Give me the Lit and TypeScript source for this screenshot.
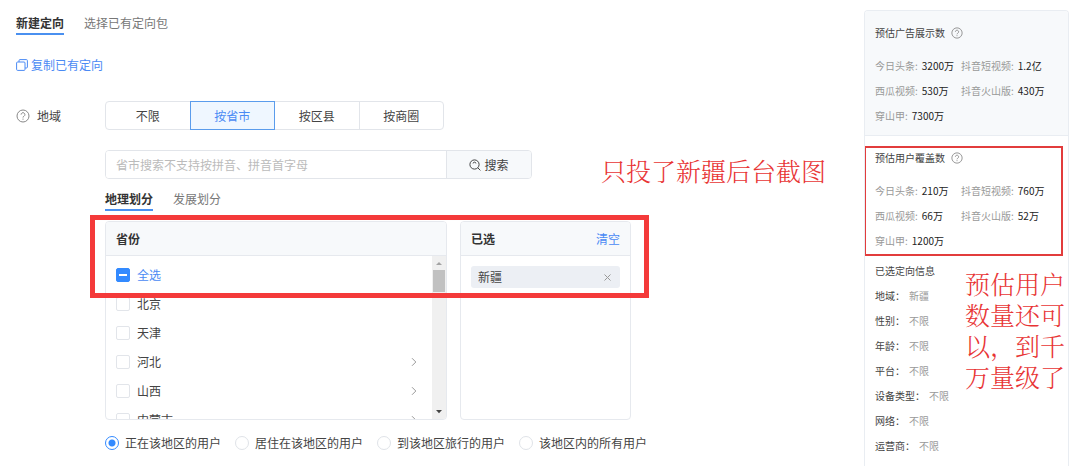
import { LitElement, html, css, svg } from "lit";
import { customElement, state } from "lit/decorators.js";

type Pair = [string, string];

const REGION_MODES = ["不限", "按省市", "按区县", "按商圈"];
const PROVINCES: { name: string; expandable: boolean }[] = [
  { name: "北京", expandable: false },
  { name: "天津", expandable: false },
  { name: "河北", expandable: true },
  { name: "山西", expandable: true },
  { name: "内蒙古", expandable: true },
];
const AUDIENCES = ["正在该地区的用户", "居住在该地区的用户", "到该地区旅行的用户", "该地区内的所有用户"];
const IMPRESSIONS: Pair[] = [
  ["今日头条", "3200万"],
  ["抖音短视频", "1.2亿"],
  ["西瓜视频", "530万"],
  ["抖音火山版", "430万"],
  ["穿山甲", "7300万"],
];
const REACH: Pair[] = [
  ["今日头条", "210万"],
  ["抖音短视频", "760万"],
  ["西瓜视频", "66万"],
  ["抖音火山版", "52万"],
  ["穿山甲", "1200万"],
];
const TARGETING: Pair[] = [
  ["地域", "新疆"],
  ["性别", "不限"],
  ["年龄", "不限"],
  ["平台", "不限"],
  ["设备类型", "不限"],
  ["网络", "不限"],
  ["运营商", "不限"],
];

const helpIcon = (size: number) => html`<svg class="help" width=${size} height=${size} viewBox="0 0 14 14" fill="none" stroke="currentColor" aria-hidden="true">
  ${svg`<circle cx="7" cy="7" r="6"/><path d="M5.1 5.6a1.9 1.9 0 1 1 2.9 1.6c-.7.4-1 .7-1 1.3"/><path d="M7 9.6v1.1"/>`}
</svg>`;

const reset = css`
  * { box-sizing: border-box; }
  button, input { font: inherit; color: inherit; margin: 0; }
  button { padding: 0; border: 0; background: none; cursor: pointer; }
  a { text-decoration: none; }
`;

@customElement("region-picker")
export class RegionPicker extends LitElement {
  static styles = [reset, css`
    :host { display: block; position: relative; }
    .panels { display: flex; gap: 13px; }
    .panel { height: 199px; border: 1px solid #e6e9ee; border-radius: 4px; overflow: hidden; background: #fff; }
    .source { width: 342px; }
    .chosen { width: 171px; }
    .head { display: flex; justify-content: space-between; align-items: center; height: 34px; padding: 0 10px; background: #f7f9fb; border-bottom: 1px solid #e6e9ee; }
    .title { font-weight: 700; color: #333; }
    .clear { color: #4a8af4; }
    .body { display: flex; height: 163px; }
    .list { flex: 1; margin: 0; padding: 4px 14px 0 10px; list-style: none; overflow: hidden; }
    .row { display: flex; align-items: center; justify-content: space-between; height: 29px; }
    .pick { display: flex; align-items: center; gap: 7px; }
    .all { color: #4a8af4; }
    .box { appearance: none; width: 14px; height: 14px; border: 1px solid #e2e5ea; border-radius: 2px; background: #fff; }
    .box:checked { background: #338aff; border-color: #338aff; }
    .box:indeterminate { border-color: #338aff; background: linear-gradient(#fff, #fff) center / 8px 2px no-repeat #338aff; }
    .arrow { display: block; color: #999; }
    .bar { display: flex; flex-direction: column; align-items: center; justify-content: space-between; width: 14px; background: #f0f0f0; }
    .thumb { width: 12px; height: 22px; background: #c1c1c1; }
    .cap { display: block; height: 14px; }
    .spacer { flex: 1; }
    .tag { display: flex; align-items: center; justify-content: space-between; height: 22px; margin: 10px; padding: 0 8px 0 7px; border-radius: 3px; background: #eceff4; }
    .remove { display: block; color: #999; line-height: 0; }
    .mark { position: absolute; top: -6px; left: -15px; width: 559px; height: 83px; border: 5px solid #f43a3a; pointer-events: none; }
  `];

  render() {
    return html`
      <div class="panels">
        <section class="panel source">
          <header class="head"><span class="title">省份</span></header>
          <div class="body">
            <ul class="list">
              <li class="row"><label class="pick all"><input class="box" type="checkbox" .indeterminate=${true}>全选</label></li>
              ${PROVINCES.map((p) => html`
                <li class="row">
                  <label class="pick"><input class="box" type="checkbox">${p.name}</label>
                  ${p.expandable ? html`<button aria-label="展开${p.name}"><svg class="arrow" width="8" height="10" viewBox="0 0 8 10" fill="none" stroke="currentColor"><path d="M2 1.2 5.8 5 2 8.8"/></svg></button>` : null}
                </li>`)}
            </ul>
            <div class="bar">
              <svg class="cap" width="14" height="14" viewBox="0 0 14 14"><path d="M4 9 7 6l3 3z" fill="#a3a3a3"/></svg>
              <div class="thumb"></div>
              <div class="spacer"></div>
              <svg class="cap" width="14" height="14" viewBox="0 0 14 14"><path d="M4 5h6L7 8.2z" fill="#444"/></svg>
            </div>
          </div>
        </section>
        <section class="panel chosen">
          <header class="head"><span class="title">已选</span><button class="clear">清空</button></header>
          <div class="tag">新疆<button class="remove" aria-label="移除新疆"><svg width="9" height="9" viewBox="0 0 9 9" fill="none" stroke="currentColor"><path d="m1.5 1.5 6 6m0-6-6 6"/></svg></button></div>
        </section>
      </div>
      <div class="mark"></div>
    `;
  }
}

@customElement("estimate-panel")
export class EstimatePanel extends LitElement {
  static styles = [reset, css`
    :host { display: block; border: 1px solid #e9edf2; border-bottom: 0; border-radius: 4px 4px 0 0; font-size: 10px; line-height: 20px; color: #444; overflow: hidden; }
    .block { position: relative; padding: 12px 10px 7px; }
    .tinted { background: #f7f9fb; border-bottom: 1px solid #e9edf2; }
    .reach { padding-bottom: 5px; }
    .title { display: flex; align-items: center; gap: 6px; margin: 0 0 10px; font-size: 10px; font-weight: 400; }
    .help { color: #888; }
    .stats { display: grid; grid-template-columns: 86px 1fr; margin: 0; line-height: 25px; }
    .stat { display: flex; gap: 4px; white-space: nowrap; }
    .name { color: #999; }
    .value { margin: 0; color: #222; }
    .info { position: relative; padding: 0 10px; line-height: 25px; }
    .heading { margin: 0; font-size: 10px; font-weight: 400; }
    .facts { margin: 0; }
    .fact { display: flex; gap: 4px; }
    .muted { margin: 0; color: #999; }
    .mark { position: absolute; top: 10px; left: -1px; right: 5px; bottom: 2px; border: 2px solid #e23c3c; pointer-events: none; }
    .note { position: absolute; top: 10px; right: 0; width: 103px; margin: 0; font-family: "Noto Serif CJK SC", "Noto Sans CJK SC", serif; font-weight: 300; font-size: 25px; line-height: 31px; color: #e83434; }
  `];

  private stats(items: Pair[]) {
    return html`<dl class="stats">${items.map(([k, v]) => html`<div class="stat"><dt class="name">${k}:</dt><dd class="value">${v}</dd></div>`)}</dl>`;
  }

  render() {
    return html`
      <section class="block tinted">
        <h3 class="title">预估广告展示数 ${helpIcon(12)}</h3>
        ${this.stats(IMPRESSIONS)}
      </section>
      <section class="block reach">
        <h3 class="title">预估用户覆盖数 ${helpIcon(12)}</h3>
        ${this.stats(REACH)}
        <div class="mark"></div>
      </section>
      <section class="info">
        <h3 class="heading">已选定向信息</h3>
        <dl class="facts">${TARGETING.map(([k, v]) => html`<div class="fact"><dt>${k}：</dt><dd class="muted">${v}</dd></div>`)}</dl>
        <p class="note">预估用户数量还可以，到千万量级了</p>
      </section>
    `;
  }
}

@customElement("app-root")
export class AppRoot extends LitElement {
  @state() private mode = "按省市";
  @state() private audience = AUDIENCES[0];

  static styles = [reset, css`
    :host { display: flex; min-height: 100vh; overflow: hidden; background: #fff; color: #444; font-family: "Noto Sans CJK SC", sans-serif; font-size: 12px; line-height: 20px; }
    .main { flex: 1; min-width: 0; padding: 12px 0 0 16px; }
    .side { width: 205px; margin: 10px 11px 0 0; }
    .tabs { display: flex; gap: 20px; }
    .tab { height: 23px; line-height: 20px; border-bottom: 2px solid transparent; color: #777; }
    .tab.on { font-weight: 700; color: #333; border-color: #4a90f0; }
    .copy { display: inline-flex; align-items: center; gap: 3px; margin: 20px 0 26px; color: #4a8af4; }
    .field { display: grid; grid-template-columns: 89px 1fr; }
    .label { display: flex; align-items: center; gap: 7px; height: 29px; }
    .help { color: #888; }
    .segments { display: flex; width: 339px; height: 29px; }
    .segment { flex: 1; margin-left: -1px; border: 1px solid #e2e5ea; }
    .segment:first-child { margin-left: 0; border-radius: 4px 0 0 4px; }
    .segment:last-child { border-radius: 0 4px 4px 0; }
    .segment.on { position: relative; background: #eff7ff; border-color: #5a9cec; color: #4a8af4; }
    .line { display: flex; align-items: center; margin: 20px 0 9px; }
    .search { display: flex; width: 427px; height: 29px; border: 1px solid #e2e5ea; border-radius: 4px; overflow: hidden; }
    .query { flex: 1; min-width: 0; padding: 0 10px; border: 0; outline: 0; background: #fff; }
    .query::placeholder { color: #bbb; opacity: 1; }
    .go { display: flex; align-items: center; justify-content: center; gap: 3px; width: 85px; background: #f7f9fb; border-left: 1px solid #e2e5ea; }
    .note { height: 29px; margin: 0 0 0 69px; font-family: "Noto Serif CJK SC", "Noto Sans CJK SC", serif; font-weight: 300; font-size: 25px; line-height: 40px; white-space: nowrap; color: #e83434; }
    .picker { margin-top: 10px; }
    .audiences { display: flex; gap: 14px; margin-top: 13px; }
    .audience { display: flex; align-items: center; gap: 6px; white-space: nowrap; }
    .radio { appearance: none; width: 14px; height: 14px; border: 1px solid #dfe3e8; border-radius: 50%; background: #fff; }
    .radio:checked { border-color: #338aff; background: radial-gradient(circle, #338aff 3px, #fff 4px); }
  `];

  render() {
    return html`
      <main class="main">
        <nav class="tabs">
          <button class="tab on">新建定向</button>
          <button class="tab">选择已有定向包</button>
        </nav>
        <a class="copy" href="#">
          <svg width="12" height="12" viewBox="0 0 12 12" fill="none" stroke="currentColor" aria-hidden="true"><rect x=".6" y="3" width="8.4" height="8.4" rx="1"/><path d="M3 3V1.6a1 1 0 0 1 1-1h6.4a1 1 0 0 1 1 1V8a1 1 0 0 1-1 1H9"/></svg>复制已有定向</a>
        <div class="field">
          <div class="label">${helpIcon(14)}地域</div>
          <div>
            <div class="segments" role="group" aria-label="地域">
              ${REGION_MODES.map((m) => html`<button class="segment ${m === this.mode ? "on" : ""}" @click=${() => (this.mode = m)}>${m}</button>`)}
            </div>
            <div class="line">
              <form class="search" @submit=${(e: Event) => e.preventDefault()}>
                <input class="query" type="text" aria-label="搜索省市" placeholder="省市搜索不支持按拼音、拼音首字母">
                <button class="go"><svg width="12" height="12" viewBox="0 0 12 12" fill="none" stroke="currentColor" aria-hidden="true"><circle cx="5.5" cy="5.5" r="4.6"/><path d="m8.8 8.8 2.6 2.6M3.8 4.2a2.2 2.2 0 0 1 3.4 0"/></svg>搜索</button>
              </form>
              <p class="note">只投了新疆后台截图</p>
            </div>
            <nav class="tabs">
              <button class="tab on">地理划分</button>
              <button class="tab">发展划分</button>
            </nav>
            <region-picker class="picker"></region-picker>
            <div class="audiences">
              ${AUDIENCES.map((a) => html`<label class="audience"><input class="radio" type="radio" name="audience" .checked=${a === this.audience} @change=${() => (this.audience = a)}>${a}</label>`)}
            </div>
          </div>
        </div>
      </main>
      <estimate-panel class="side"></estimate-panel>
    `;
  }
}
